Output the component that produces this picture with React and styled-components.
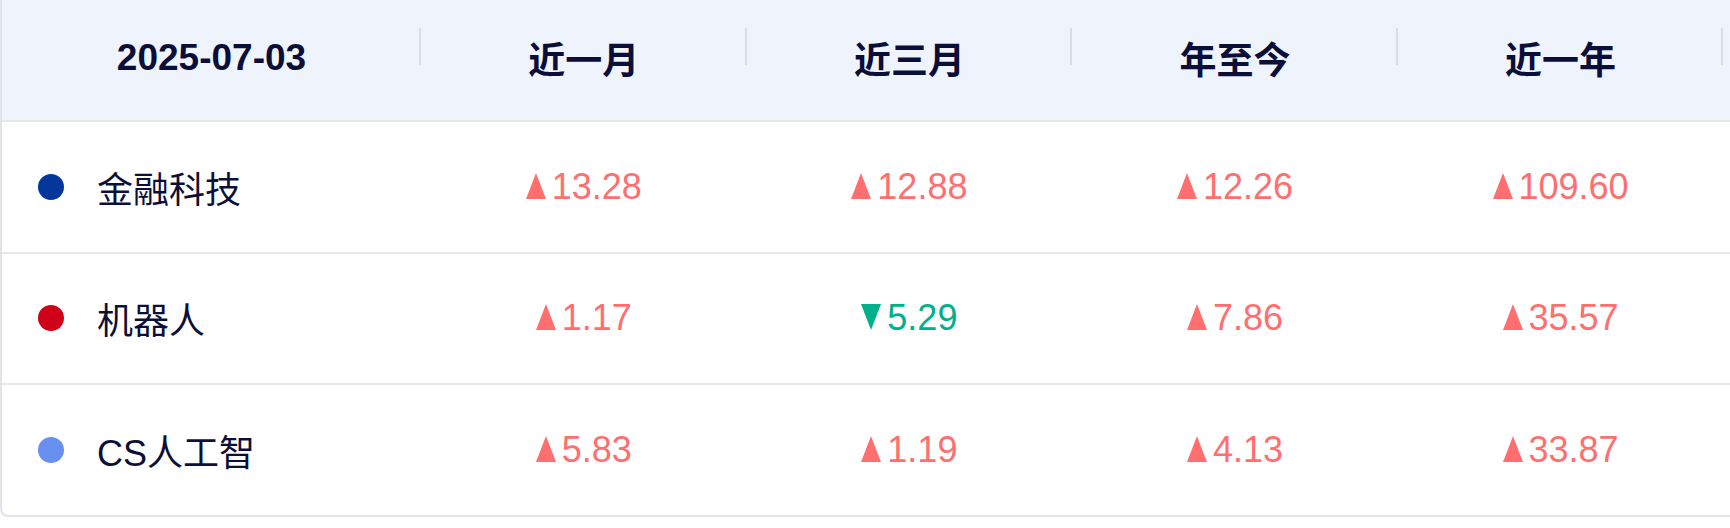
import styled, { createGlobalStyle } from 'styled-components';

const GlobalStyle = createGlobalStyle`
  body {
    margin: 0;
    background: #ffffff;
    overflow: hidden;
    font-family: "Liberation Sans", "Noto Sans CJK SC", Arial, sans-serif;
  }
`;

const COLS = '419px repeat(4, 325.6px) 1fr';

const Card = styled.div`
  width: 2050px;
  border-left: 2px solid #e2e3e9;
  border-bottom: 2px solid #e2e3e9;
  border-bottom-left-radius: 8px;
  overflow: hidden;
  background: #ffffff;
`;

const HeaderRow = styled.div`
  display: grid;
  grid-template-columns: ${COLS};
  height: 120px;
  background: #eef3fc;
  border-bottom: 2px solid #e6e7eb;
`;

const HeadCell = styled.div`
  position: relative;
  display: flex;
  align-items: center;
  justify-content: center;
  padding-bottom: 5px;
  font-size: 37px;
  font-weight: 700;
  color: #0a0e38;
  &::after {
    content: '';
    display: ${p => (p.$sep ? 'block' : 'none')};
    position: absolute;
    right: 0;
    top: 28px;
    width: 2px;
    height: 37px;
    background: #dcdde4;
  }
`;

const BodyRow = styled.div`
  display: grid;
  grid-template-columns: ${COLS};
  height: 129.5px;
  border-bottom: ${p => (p.$last ? 'none' : '2px solid #e6e7eb')};
`;

const NameCell = styled.div`
  display: flex;
  align-items: center;
  gap: 33px;
  padding-left: 36px;
  font-size: 36px;
  color: #0c1038;
`;

const Dot = styled.span`
  width: 26px;
  height: 26px;
  border-radius: 50%;
  background: ${p => p.$color};
  flex-shrink: 0;
`;

const ValueCell = styled.div`
  display: flex;
  align-items: center;
  justify-content: center;
  font-size: 36px;
  color: ${p => (p.$down ? '#00b08b' : '#ff6f70')};
`;

const Value = styled.span`
  line-height: 1;
  white-space: nowrap;
  svg {
    display: inline-block;
    vertical-align: baseline;
    margin-right: 6px;
  }
`;

const Arrow = ({ down }) => (
  <svg width="20" height="26" viewBox="0 0 20 26">
    <polygon
      points={down ? '0,0 20,0 10,26' : '10,0 20,26 0,26'}
      fill="currentColor"
    />
  </svg>
);

const headers = ['2025-07-03', '近一月', '近三月', '年至今', '近一年'];

const rows = [
  { name: '金融科技', color: '#03379a', values: [13.28, 12.88, 12.26, 109.6] },
  { name: '机器人', color: '#cf0019', values: [1.17, -5.29, 7.86, 35.57] },
  { name: 'CS人工智', color: '#6890f1', values: [5.83, 1.19, 4.13, 33.87] },
];

export default function App() {
  return (
    <>
      <GlobalStyle />
      <Card>
        <HeaderRow>
          {headers.map(h => (
            <HeadCell key={h} $sep>
              {h}
            </HeadCell>
          ))}
          <HeadCell />
        </HeaderRow>
        {rows.map((r, i) => (
          <BodyRow key={r.name} $last={i === rows.length - 1}>
            <NameCell>
              <Dot $color={r.color} />
              {r.name}
            </NameCell>
            {r.values.map((v, j) => (
              <ValueCell key={j} $down={v < 0}>
                <Value>
                  <Arrow down={v < 0} />
                  {Math.abs(v).toFixed(2)}
                </Value>
              </ValueCell>
            ))}
            <ValueCell />
          </BodyRow>
        ))}
      </Card>
    </>
  );
}
